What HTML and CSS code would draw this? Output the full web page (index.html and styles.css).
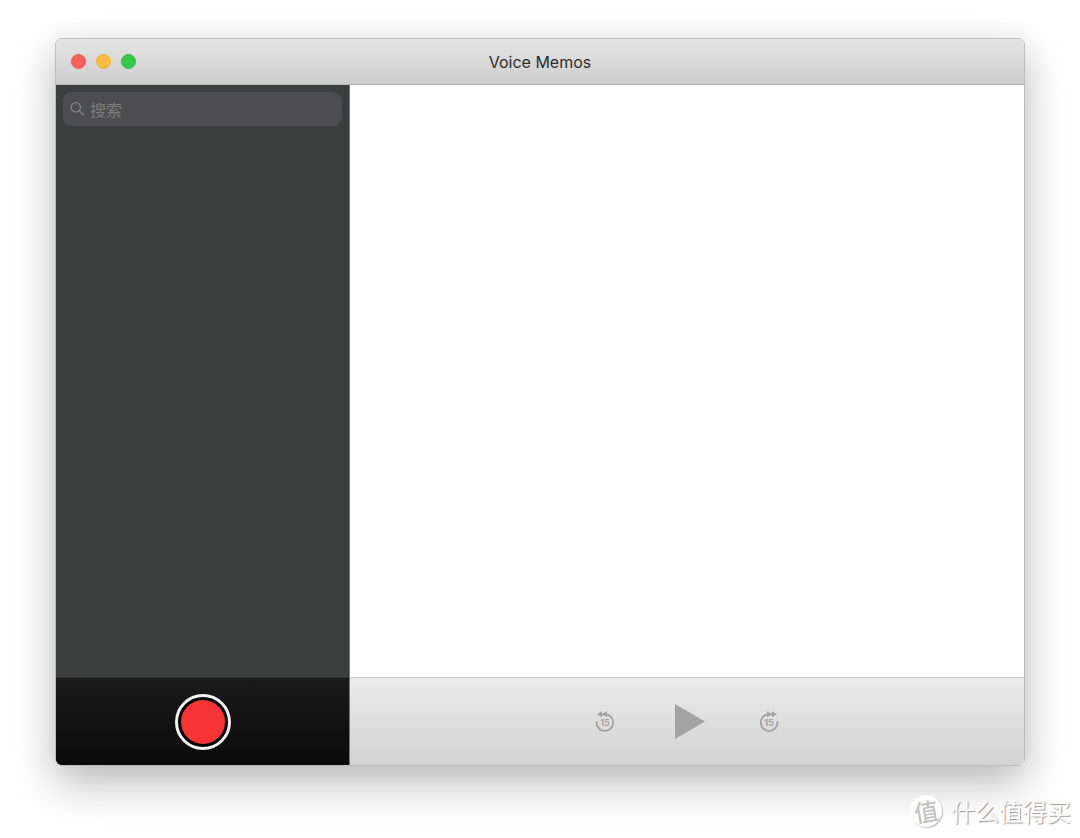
FILE: index.html
```html
<!DOCTYPE html>
<html lang="zh-CN">
<head>
<meta charset="utf-8">
<meta name="viewport" content="width=device-width, initial-scale=1">
<title>Voice Memos</title>
<link rel="stylesheet" href="styles.css">
</head>
<body>
<main class="window">
  <header class="titlebar">
    <div class="lights">
      <button class="light close" aria-label="Close"></button>
      <button class="light minimize" aria-label="Minimize"></button>
      <button class="light expand" aria-label="Zoom"></button>
    </div>
    <h1 class="title">Voice Memos</h1>
  </header>
  <div class="content">
    <aside class="sidebar">
      <div class="memos">
        <label class="search">
          <svg class="search-icon" viewBox="0 0 16 16" aria-hidden="true"><circle cx="6.2" cy="5.6" r="4.9"/><path d="M9.8 9.2 14.8 14.2"/></svg>
          <input class="search-input" type="text" placeholder="搜索" aria-label="搜索">
        </label>
      </div>
      <div class="recorder">
        <button class="record" aria-label="Record"><span class="record-dot"></span></button>
      </div>
    </aside>
    <section class="detail">
      <div class="canvas"></div>
      <div class="player">
        <button class="skip" aria-label="Back 15 seconds">
          <svg class="skip-icon" viewBox="0 0 20 22" aria-hidden="true">
            <path class="ring" d="M1.7 10.2A8.3 8.3 0 1 0 10 3.3H7"/>
            <path class="arrows" d="M2 3.2 7 .2V6.2ZM7 3.2 12 .2V6.2Z"/>
            <text class="seconds" x="10" y="14.5">15</text>
          </svg>
        </button>
        <button class="play" aria-label="Play">
          <svg class="play-icon" viewBox="0 0 30 36" aria-hidden="true"><path d="M0 0 30 17.5 0 35Z"/></svg>
        </button>
        <button class="skip" aria-label="Forward 15 seconds">
          <svg class="skip-icon" viewBox="0 0 20 22" aria-hidden="true">
            <path class="ring" d="M18.3 10.2A8.3 8.3 0 1 1 10 3.3H13"/>
            <path class="arrows" d="M18 3.2 13 .2V6.2ZM13 3.2 8 .2V6.2Z"/>
            <text class="seconds" x="10" y="14.5">15</text>
          </svg>
        </button>
      </div>
    </section>
  </div>
</main>
<div class="watermark"><span class="badge"><span class="badge-text">值</span></span><span>什么值得买</span></div>
</body>
</html>
```
FILE: styles.css
```css
* { box-sizing: border-box; }
body {
  margin: 0;
  min-height: 100vh;
  padding: 38px 55px 72px;
  display: flex;
  background: #fff;
  font-family: Inter, "Noto Sans CJK SC", sans-serif;
}
button { padding: 0; border: 0; background: none; }
.window {
  flex: 1;
  display: flex;
  flex-direction: column;
  border-radius: 7px;
  overflow: hidden;
  border: 1px solid #bcbcbc;
  box-shadow: 0 18px 44px rgba(0,0,0,.26), 0 0 30px rgba(0,0,0,.05);
}
.titlebar {
  height: 46px;
  padding: 0 15px;
  display: grid;
  grid-template-columns: 1fr auto 1fr;
  align-items: center;
  border-bottom: 1px solid #b4b4b4;
  background: linear-gradient(#e5e5e5, #cdcdcd);
}
.lights { display: flex; gap: 10px; }
.light { width: 15px; height: 15px; border-radius: 50%; border: 1px solid; }
.close { background: #fc605c; border-color: #ee5753; }
.minimize { background: #fdbc40; border-color: #e9ad3d; }
.expand { background: #34c84a; border-color: #2fba43; }
.title { margin: 0; font-size: 16px; line-height: 20px; font-weight: 400; color: #2d2d2d; }
.content { flex: 1; display: grid; grid-template-columns: 294px 1fr; }
.sidebar { display: flex; flex-direction: column; background: #3d3f3e; border-right: 1px solid #777; }
.memos { flex: 1; padding: 7px; }
.search {
  height: 34px;
  padding: 0 7px;
  display: flex;
  align-items: center;
  gap: 5px;
  border-radius: 9px;
  background: #4e4e50;
}
.search-icon { width: 15px; height: 15px; fill: none; stroke: #858587; stroke-width: 1.4; }
.search-input {
  flex: 1;
  min-width: 0;
  padding: 0;
  border: 0;
  outline: 0;
  background: transparent;
  color: #ddd;
  font: 16px/24px "Noto Sans CJK SC", sans-serif;
}
.search-input::placeholder { color: #7c7c7e; opacity: 1; }
.recorder, .player { height: 88px; display: flex; align-items: center; justify-content: center; }
.recorder { border-top: 1px solid #333; background: linear-gradient(#1a1a1a, #0b0b0b); }
.record {
  width: 56px;
  height: 56px;
  padding: 3px;
  border: 3px solid #f4f4f4;
  border-radius: 50%;
  background: #000;
  display: grid;
}
.record-dot { border-radius: 50%; background: #f73535; }
.detail { display: flex; flex-direction: column; background: #fff; }
.canvas { flex: 1; }
.player { gap: 52px; border-top: 1px solid #cfcfcf; background: linear-gradient(#ebebeb, #d2d2d2); }
.skip, .play { display: grid; }
.skip-icon { width: 20px; height: 22px; }
.ring { fill: none; stroke: #a3a3a3; stroke-width: 1.9; }
.arrows { fill: #a3a3a3; }
.seconds { fill: #a3a3a3; font: 700 9px Inter, sans-serif; text-anchor: middle; }
.play { padding: 0 2px 0 8px; }
.play-icon { width: 30px; height: 36px; fill: #a3a3a3; }
.watermark {
  position: absolute;
  right: 9px;
  bottom: 11px;
  display: flex;
  align-items: center;
  gap: 9px;
  color: #fff;
  font: 24px/32px "Noto Sans CJK SC", sans-serif;
  text-shadow: 1px 1px 1px #999;
}
.badge {
  width: 32px;
  height: 32px;
  border-radius: 50%;
  background: #fff;
  box-shadow: 1px 1px 1px #bbb;
  color: #c4c4c4;
  font-weight: 500;
  text-align: center;
  text-shadow: none;
}
.badge-text { display: block; transform: rotate(-10deg); }
```
